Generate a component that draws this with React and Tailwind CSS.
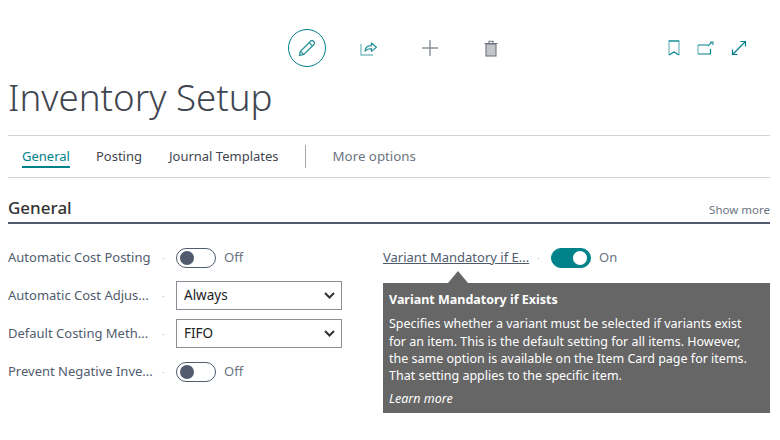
const Toggle = ({ on }) => (
  <div className="flex items-center gap-2">
    <div className={`flex h-5 w-10 items-center rounded-full border px-[3px] ${on ? 'justify-end border-[#00828a] bg-[#00828a]' : 'justify-start border-[#505c6d] bg-white'}`}>
      <div className={`h-3.5 w-3.5 rounded-full ${on ? 'bg-white' : 'bg-[#505c6d]'}`} />
    </div>
    <span className="text-[13px] text-[#6b7480]">{on ? 'On' : 'Off'}</span>
  </div>
);

const Field = ({ label, children, link }) => (
  <div className="flex h-[38px] items-center">
    <span className={`w-[150px] text-[13px] text-[#505c6d] whitespace-nowrap ${link ? 'underline' : ''}`}>{label}</span>
    <span className="w-[18px] pl-1 text-[10px] leading-none text-[#c8c8c8]">·</span>
    {children}
  </div>
);

const Select = ({ value }) => (
  <div className="mb-[2px] flex h-[29px] w-[166px] items-center justify-between border border-[#8a8f96] pl-[7px] pr-1.5 text-[13.5px] text-[#212121]">
    <span>{value}</span>
    <svg width="11" height="7" viewBox="0 0 11 7" fill="none" stroke="#333" strokeWidth="2"><path d="M1 1l4.5 4.5L10 1" /></svg>
  </div>
);

const Action = ({ children, className }) => (
  <div className={`flex items-center justify-center ${className}`}>{children}</div>
);

export default function App() {
  return (
    <div className="relative h-[440px] w-[780px] overflow-hidden bg-white pl-2 pr-[10px] font-['Noto_Sans',sans-serif]">
      {/* action bar */}
      <div className="flex h-[72px] items-center pt-[24px]">
        <div className="ml-[280px] flex items-center">
          <Action className="h-[38px] w-[38px] rounded-full border border-[#00828a]">
            <svg width="20" height="20" viewBox="0 0 20 20" fill="none" stroke="#2a9299" strokeWidth="1.3">
              <path d="M2.5 17.5l1-4.2L13.8 3a1.6 1.6 0 0 1 2.3 0l1 1a1.6 1.6 0 0 1 0 2.2L6.8 16.5z" />
              <path d="M12.2 4.6l3.3 3.3M3.6 13.4l3 3" />
            </svg>
          </Action>
          <Action className="ml-[33px] h-5 w-5">
            <svg width="18" height="16" viewBox="0 0 18 16" fill="none">
              <path d="M1 4v11h12" stroke="#7fc0c4" strokeWidth="1.4" />
              <path d="M5 11c.3-3.6 2.8-5.4 6.4-5.4V3l5 4.2-5 4.2V8.6C8.8 8.6 6.6 9.4 5 11z" stroke="#2a9299" strokeWidth="1.2" strokeLinejoin="round" />
            </svg>
          </Action>
          <Action className="ml-[41px] h-5 w-5">
            <svg width="18" height="18" viewBox="0 0 18 18" stroke="#8a9099" strokeWidth="1.4"><path d="M9 1v16M1 9h16" /></svg>
          </Action>
          <Action className="ml-[41px] h-5 w-5">
            <svg width="14" height="17" viewBox="0 0 14 17">
              <rect x="2" y="4" width="10" height="12" fill="#c4c6cc" stroke="#6f7681" strokeWidth="1.1" />
              <path d="M0.5 3.5h13M5 3.5V1.2h4v2.3" fill="none" stroke="#6f7681" strokeWidth="1.1" />
            </svg>
          </Action>
        </div>
        <div className="ml-auto mr-[23px] flex items-center gap-[17px]">
          <svg width="12" height="16" viewBox="0 0 12 16" fill="none">
            <path d="M1 15V1h10v14" stroke="#82c3c7" strokeWidth="1.4" />
            <path d="M1 1h10M1 15l5-3 5 3" stroke="#00828a" strokeWidth="1.2" />
          </svg>
          <svg width="17" height="14" viewBox="0 0 17 14" fill="none">
            <path d="M1 4v9" stroke="#82c3c7" strokeWidth="1.4" />
            <path d="M1 4h10M1 13h12.5V8" stroke="#00828a" strokeWidth="1.2" />
            <path d="M11 5l4-4M13 1h3v3" stroke="#2a9299" strokeWidth="1.2" />
          </svg>
          <svg width="16" height="16" viewBox="0 0 16 16" fill="none" stroke="#00828a" strokeWidth="1.2">
            <path d="M2 14L14 2M9.5 1.5h5v5M1.5 9.5v5h5" />
          </svg>
        </div>
      </div>

      <h1 className="h-[50px] text-[36.7px] font-light leading-[50px] text-[#3f4650]">Inventory Setup</h1>

      {/* tabs */}
      <div className="mt-[13px] flex h-[43px] items-center border-y border-[#d3d3d3] pl-[14px] text-[13px]">
        <span className="border-b-2 border-[#00828a] leading-[20px] text-[#00828a]">General</span>
        <span className="ml-[26px] text-[#3f4650]">Posting</span>
        <span className="ml-[27px] text-[#3f4650]">Journal Templates</span>
        <span className="ml-[26px] h-[23px] w-px bg-[#a8a8a8]" />
        <span className="ml-[27px] text-[13.3px] text-[#6b7480]">More options</span>
      </div>

      {/* section header */}
      <div className="mt-[20px] flex h-[26px] items-center justify-between border-b-2 border-[#505c6d] pb-1">
        <span className="mb-[2px] text-[17px] font-medium leading-none text-[#333]">General</span>
        <span className="mt-1 text-[11.5px] text-[#6b7480]">Show more</span>
      </div>

      {/* fields */}
      <div className="mt-[15px] flex">
        <div className="w-[334px]">
          <Field label="Automatic Cost Posting"><Toggle /></Field>
          <Field label="Automatic Cost Adjus..."><Select value="Always" /></Field>
          <Field label="Default Costing Meth..."><Select value="FIFO" /></Field>
          <Field label="Prevent Negative Inve..."><Toggle /></Field>
        </div>
        <div className="ml-[41px]">
          <Field label="Variant Mandatory if E..." link><Toggle on /></Field>
        </div>
      </div>

      {/* tooltip */}
      <div className="absolute left-[383px] top-[283px] h-[130px] w-[387px] bg-[#666666] px-[6px] pt-[8px] text-[12.5px] leading-[17.3px] text-white">
        <div className="absolute -top-[12px] left-[65px] h-0 w-0 border-x-[10px] border-b-[12px] border-x-transparent border-b-[#666666]" />
        <div className="font-bold">Variant Mandatory if Exists</div>
        <p className="mt-[7px]">
          Specifies whether a variant must be selected if variants exist<br />
          for an item. This is the default setting for all items. However,<br />
          the same option is available on the Item Card page for items.<br />
          That setting applies to the specific item.
        </p>
        <div className="mt-[6px] italic">Learn more</div>
      </div>
    </div>
  );
}
